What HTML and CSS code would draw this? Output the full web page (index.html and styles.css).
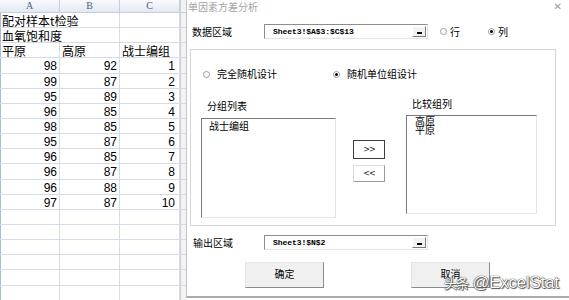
FILE: index.html
```html
<!DOCTYPE html>
<html lang="zh-CN">
<head>
    <meta charset="UTF-8">
    <title>单因素方差分析</title>
    <link rel="stylesheet" href="styles.css">
</head>
<body>
    <div class="screen">
        <div class="sheet">
            <div class="cell head">A</div><div class="cell head">B</div><div class="cell head">C</div><div class="cell head edge"></div>
            <div class="cell txt span2">配对样本t检验</div><div class="cell"></div><div class="cell edge"></div>
            <div class="cell txt span2">血氧饱和度</div><div class="cell"></div><div class="cell edge"></div>
            <div class="cell txt">平原</div><div class="cell txt">高原</div><div class="cell txt">战士编组</div><div class="cell edge"></div>
            <div class="cell num">98</div><div class="cell num">92</div><div class="cell num last">1</div><div class="cell edge"></div>
            <div class="cell num">99</div><div class="cell num">87</div><div class="cell num last">2</div><div class="cell edge"></div>
            <div class="cell num">95</div><div class="cell num">89</div><div class="cell num last">3</div><div class="cell edge"></div>
            <div class="cell num">96</div><div class="cell num">85</div><div class="cell num last">4</div><div class="cell edge"></div>
            <div class="cell num">98</div><div class="cell num">85</div><div class="cell num last">5</div><div class="cell edge"></div>
            <div class="cell num">95</div><div class="cell num">87</div><div class="cell num last">6</div><div class="cell edge"></div>
            <div class="cell num">96</div><div class="cell num">85</div><div class="cell num last">7</div><div class="cell edge"></div>
            <div class="cell num">96</div><div class="cell num">87</div><div class="cell num last">8</div><div class="cell edge"></div>
            <div class="cell num">96</div><div class="cell num">88</div><div class="cell num last">9</div><div class="cell edge"></div>
            <div class="cell num">97</div><div class="cell num">87</div><div class="cell num last">10</div><div class="cell edge"></div>
            <div class="cell"></div><div class="cell"></div><div class="cell"></div><div class="cell edge"></div>
            <div class="cell"></div><div class="cell"></div><div class="cell"></div><div class="cell edge"></div>
            <div class="cell"></div><div class="cell"></div><div class="cell"></div><div class="cell edge"></div>
            <div class="cell"></div><div class="cell"></div><div class="cell"></div><div class="cell edge"></div>
            <div class="cell"></div><div class="cell"></div><div class="cell"></div><div class="cell edge"></div>
            <div class="cell"></div><div class="cell"></div><div class="cell"></div><div class="cell edge"></div>
        </div>

        <div class="dialog">
            <div class="titlebar">
                <span class="title">单因素方差分析</span>
                <span class="close">✕</span>
            </div>

            <div class="field-row data-row">
                <span class="label">数据区域</span>
                <div class="ref">
                    <span class="ref-text">Sheet3!$A$3:$C$13</span>
                    <span class="ref-btn"></span>
                </div>
                <span class="radio tight"><span class="dot"></span>行</span>
                <span class="radio tight on second"><span class="dot"></span>列</span>
            </div>

            <div class="frame">
                <div class="design-row">
                    <span class="radio"><span class="dot"></span>完全随机设计</span>
                    <span class="radio on second"><span class="dot"></span>随机单位组设计</span>
                </div>
                <div class="lists">
                    <div class="list-col left">
                        <div class="list-label">分组列表</div>
                        <div class="listbox">
                            <div class="item">战士编组</div>
                        </div>
                    </div>
                    <div class="move-btns">
                        <button class="move default">&gt;&gt;</button>
                        <button class="move">&lt;&lt;</button>
                    </div>
                    <div class="list-col right">
                        <div class="list-label">比较组列</div>
                        <div class="listbox">
                            <div class="item squeeze">高原</div>
                            <div class="item squeeze">平原</div>
                        </div>
                    </div>
                </div>
            </div>

            <div class="field-row out-row">
                <span class="label">输出区域</span>
                <div class="ref">
                    <span class="ref-text">Sheet3!$N$2</span>
                    <span class="ref-btn"></span>
                </div>
            </div>

            <div class="actions">
                <button class="btn">确定</button>
                <button class="btn">取消</button>
            </div>
        </div>

        <div class="watermark"><span class="wm-logo">头条</span> @ExcelStat</div>
    </div>
</body>
</html>
```

FILE: styles.css
```css
* {
    box-sizing: border-box;
}
body {
    margin: 0;
    background-color: #fff;
    font-family: "Noto Sans CJK SC", "Liberation Sans", sans-serif;
    color: #000;
}
.screen {
    position: relative;
    display: flex;
    width: 569px;
    height: 300px;
    overflow: hidden;
}

/* spreadsheet */
.sheet {
    width: 186px;
    flex-shrink: 0;
    display: grid;
    grid-template-columns: 60px 60px 60px 6px;
    grid-template-rows: 13px;
    grid-auto-rows: 15.15px;
    box-shadow: inset 1px 0 #a7bbd8;
}
.cell {
    border-right: 1px solid #d5dce8;
    border-bottom: 1px solid #d5dce8;
    line-height: 14px;
    white-space: nowrap;
    overflow: visible;
}
.head {
    background: linear-gradient(#f9fafd, #e3e9f3);
    border-color: #c3cfdf;
    text-align: center;
    font-family: "Liberation Serif", serif;
    font-size: 10px;
    line-height: 12px;
    color: #4c5f80;
}
.edge {
    background-color: #f3f3f3;
    border-right: none;
    border-left: 1px solid #d0d0d0;
}
.head.edge {
    background: #f3f3f3;
}
.txt {
    font-size: 12px;
    padding: 1px 0 0 2px;
}
.span2 {
    grid-column: span 2;
}
.num {
    text-align: right;
    padding: 2px 2px 0 0;
    font-family: "Liberation Sans", sans-serif;
    font-size: 12px;
    line-height: 13px;
}
.num.last {
    padding-right: 4px;
}

/* dialog */
.dialog {
    flex: 1;
    height: 298px;
    background-color: #fff;
    border-left: 1px solid #c4c4c4;
    border-bottom: 2px solid #acacac;
    font-size: 10px;
    line-height: 12px;
    color: #000;
}
.titlebar {
    height: 18px;
    display: flex;
    justify-content: space-between;
    align-items: flex-start;
    padding: 1px 7px 0 1px;
}
.title {
    color: #a3a3a3;
    line-height: 11px;
}
.close {
    font-family: "DejaVu Sans", sans-serif;
    font-size: 10px;
    color: #9a9a9a;
    line-height: 12px;
}
.field-row {
    display: flex;
    align-items: center;
    height: 15px;
    padding-left: 5px;
}
.data-row {
    margin-top: 6px;
}
.out-row {
    margin-top: 9px;
    padding-left: 6px;
}
.label {
    width: 72px;
}
.out-row .label {
    width: 71px;
}
.ref {
    width: 164px;
    height: 15px;
    display: flex;
    align-items: center;
    justify-content: space-between;
    border: 1px solid;
    border-color: #8d8d8d #e4e4e4 #e4e4e4 #8d8d8d;
    padding-left: 8px;
}
.ref-text {
    font-family: "Liberation Mono", monospace;
    font-size: 8.1px;
    font-weight: bold;
    letter-spacing: -0.1px;
}
.ref-btn {
    width: 14px;
    height: 11px;
    margin-right: 1px;
    background-color: #f2f2f2;
    border: 1px solid;
    border-color: #fff #7c7c7c #7c7c7c #fff;
    display: flex;
    justify-content: center;
    align-items: flex-end;
    padding-bottom: 2px;
}
.ref-btn::after {
    content: "";
    width: 5px;
    height: 2px;
    background-color: #000;
}

/* radios */
.radio {
    display: inline-flex;
    align-items: center;
    gap: 7px;
}
.radio.tight {
    gap: 3px;
    margin-left: 12px;
}
.radio.tight.second {
    margin-left: 28px;
}
.dot {
    width: 7px;
    height: 7px;
    border: 1px solid #9b9b9b;
    border-radius: 50%;
    display: flex;
    align-items: center;
    justify-content: center;
}
.on .dot::after {
    content: "";
    width: 3px;
    height: 3px;
    border-radius: 50%;
    background-color: #000;
}

.frame {
    margin: 10px 0 0 3px;
    width: 366px;
    height: 177px;
    border: 1px solid #d5d5d5;
}
.design-row {
    display: flex;
    align-items: center;
    padding-left: 12px;
    margin-top: 18px;
    height: 12px;
}
.design-row .second {
    margin-left: 56px;
}
.lists {
    display: flex;
    align-items: flex-start;
    margin-top: 3px;
}
.list-col {
    display: flex;
    flex-direction: column;
}
.list-col.left {
    margin-left: 10px;
    width: 135px;
    padding-top: 17px;
}
.list-col.right {
    margin-left: 21px;
    width: 131px;
    padding-top: 15px;
}
.list-label {
    padding-left: 6px;
    height: 12px;
}
.left .list-label {
    margin-bottom: 6px;
}
.right .list-label {
    margin-bottom: 5px;
}
.listbox {
    height: 100px;
    border: 1px solid;
    border-color: #7a7a7a #e6e6e6 #e6e6e6 #7a7a7a;
    padding: 1px 0 0 7px;
}
.item {
    line-height: 12px;
}
.right .listbox {
    height: 99px;
    padding: 0 0 0 8px;
}
.item.squeeze {
    line-height: 8px;
    padding-top: 1px;
}
.move-btns {
    display: flex;
    flex-direction: column;
    margin: 57px 0 0 17px;
    gap: 6px;
}
.move {
    width: 32px;
    height: 19px;
    padding: 0;
    background-color: #fff;
    border: 1px solid;
    border-color: #dcdcdc #9a9a9a #9a9a9a #dcdcdc;
    font-family: "DejaVu Sans", sans-serif;
    font-size: 8px;
    color: #222;
    letter-spacing: -1px;
}
.move.default {
    border: 1px solid #3c3c3c;
}
.move + .move {
    height: 17px;
}

.actions {
    display: flex;
    margin-top: 12px;
    padding-left: 58px;
    gap: 87px;
}
.btn {
    width: 79px;
    height: 26px;
    padding: 0 0 3px;
    background-color: #f0f0f0;
    border: 1px solid;
    border-color: #e6e6e6 #8a8a8a #8a8a8a #e6e6e6;
    font-family: "Noto Sans CJK SC", sans-serif;
    font-size: 10px;
    color: #000;
}

.watermark {
    position: absolute;
    left: 444px;
    top: 272px;
    white-space: nowrap;
    font-family: "Liberation Sans", "Noto Sans CJK SC", sans-serif;
    font-size: 16.5px;
    line-height: 20px;
    color: #fff;
    text-shadow: 0 0 1px #333, 0 0 1px #333, 1px 1px 1px #555;
}
.wm-logo {
    font-size: 13px;
    letter-spacing: -1px;
}
```
